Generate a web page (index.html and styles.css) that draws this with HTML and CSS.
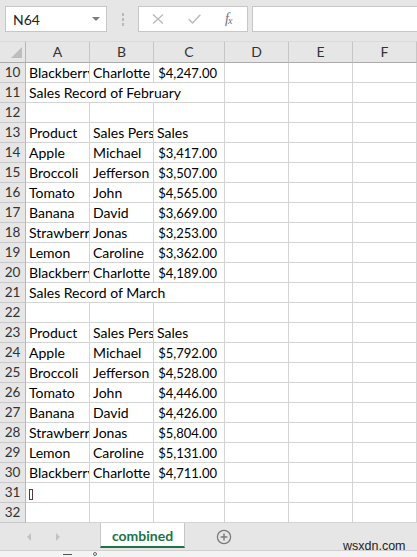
FILE: index.html
```html
<!DOCTYPE html>
<html>
<head>
<meta charset="utf-8">
<link rel="stylesheet" href="styles.css">
</head>
<body>
<div class="toolbar">
  <div class="namebox"><span class="ref">N64</span><span class="caret"></span></div>
  <div class="dots"><i></i><i></i><i></i></div>
  <div class="fxbox">
    <svg class="ico-x" width="12" height="10" viewBox="0 0 12 10"><path d="M1 0.5 L11 9.5 M11 0.5 L1 9.5" stroke="#b9b9b9" stroke-width="1.3" fill="none"/></svg>
    <svg class="ico-ok" width="13" height="10" viewBox="0 0 13 10"><path d="M0.8 5.2 L4.6 9 L12.3 0.8" stroke="#b9b9b9" stroke-width="1.4" fill="none"/></svg>
    <span class="fx">f<sub>x</sub></span>
  </div>
  <div class="formula"></div>
</div>

<div class="grid">
  <div class="corner"><span class="tri"></span></div>
  <div class="ch">A</div><div class="ch">B</div><div class="ch">C</div><div class="ch">D</div><div class="ch">E</div><div class="ch">F</div>

  <div class="rh">10</div><div class="c">Blackberry</div><div class="c">Charlotte</div><div class="c num">$4,247.00</div><div class="c"></div><div class="c"></div><div class="c"></div>
  <div class="rh">11</div><div class="c span3">Sales Record of February</div><div class="c"></div><div class="c"></div><div class="c"></div>
  <div class="rh">12</div><div class="c"></div><div class="c"></div><div class="c"></div><div class="c"></div><div class="c"></div><div class="c"></div>
  <div class="rh">13</div><div class="c">Product</div><div class="c">Sales Person</div><div class="c">Sales</div><div class="c"></div><div class="c"></div><div class="c"></div>
  <div class="rh">14</div><div class="c">Apple</div><div class="c">Michael</div><div class="c num">$3,417.00</div><div class="c"></div><div class="c"></div><div class="c"></div>
  <div class="rh">15</div><div class="c">Broccoli</div><div class="c">Jefferson</div><div class="c num">$3,507.00</div><div class="c"></div><div class="c"></div><div class="c"></div>
  <div class="rh">16</div><div class="c">Tomato</div><div class="c">John</div><div class="c num">$4,565.00</div><div class="c"></div><div class="c"></div><div class="c"></div>
  <div class="rh">17</div><div class="c">Banana</div><div class="c">David</div><div class="c num">$3,669.00</div><div class="c"></div><div class="c"></div><div class="c"></div>
  <div class="rh">18</div><div class="c">Strawberry</div><div class="c">Jonas</div><div class="c num">$3,253.00</div><div class="c"></div><div class="c"></div><div class="c"></div>
  <div class="rh">19</div><div class="c">Lemon</div><div class="c">Caroline</div><div class="c num">$3,362.00</div><div class="c"></div><div class="c"></div><div class="c"></div>
  <div class="rh">20</div><div class="c">Blackberry</div><div class="c">Charlotte</div><div class="c num">$4,189.00</div><div class="c"></div><div class="c"></div><div class="c"></div>
  <div class="rh">21</div><div class="c span3">Sales Record of March</div><div class="c"></div><div class="c"></div><div class="c"></div>
  <div class="rh">22</div><div class="c"></div><div class="c"></div><div class="c"></div><div class="c"></div><div class="c"></div><div class="c"></div>
  <div class="rh">23</div><div class="c">Product</div><div class="c">Sales Person</div><div class="c">Sales</div><div class="c"></div><div class="c"></div><div class="c"></div>
  <div class="rh">24</div><div class="c">Apple</div><div class="c">Michael</div><div class="c num">$5,792.00</div><div class="c"></div><div class="c"></div><div class="c"></div>
  <div class="rh">25</div><div class="c">Broccoli</div><div class="c">Jefferson</div><div class="c num">$4,528.00</div><div class="c"></div><div class="c"></div><div class="c"></div>
  <div class="rh">26</div><div class="c">Tomato</div><div class="c">John</div><div class="c num">$4,446.00</div><div class="c"></div><div class="c"></div><div class="c"></div>
  <div class="rh">27</div><div class="c">Banana</div><div class="c">David</div><div class="c num">$4,426.00</div><div class="c"></div><div class="c"></div><div class="c"></div>
  <div class="rh">28</div><div class="c">Strawberry</div><div class="c">Jonas</div><div class="c num">$5,804.00</div><div class="c"></div><div class="c"></div><div class="c"></div>
  <div class="rh">29</div><div class="c">Lemon</div><div class="c">Caroline</div><div class="c num">$5,131.00</div><div class="c"></div><div class="c"></div><div class="c"></div>
  <div class="rh">30</div><div class="c">Blackberry</div><div class="c">Charlotte</div><div class="c num">$4,711.00</div><div class="c"></div><div class="c"></div><div class="c"></div>
  <div class="rh">31</div><div class="c"><span class="tofu"></span></div><div class="c"></div><div class="c"></div><div class="c"></div><div class="c"></div><div class="c"></div>
  <div class="rh">32</div><div class="c"></div><div class="c"></div><div class="c"></div><div class="c"></div><div class="c"></div><div class="c"></div>
</div>

<div class="tabbar">
  <div class="nav"><span class="arr-l"></span><span class="arr-r"></span></div>
  <div class="tab">combined</div>
  <svg class="add" width="16" height="16" viewBox="0 0 16 16"><circle cx="8" cy="8" r="6.6" stroke="#7a7a7a" stroke-width="1.3" fill="none"/><path d="M8 4.6 V11.4 M4.6 8 H11.4" stroke="#7a7a7a" stroke-width="1.4"/></svg>
</div>
<div class="statusbar"><span class="sb-line"></span><span class="sb-dot"></span></div>
<div class="watermark">wsxdn.com</div>
</body>
</html>
```
FILE: styles.css
```css
* { box-sizing: border-box; }
html, body { margin: 0; padding: 0; }
body {
  width: 417px;
  height: 557px;
  overflow: hidden;
  position: relative;
  background: #fff;
  font-family: Lato, "Liberation Sans", sans-serif;
  color: #000;
}

/* formula bar */
.toolbar {
  height: 41px;
  background: #e6e6e6;
  display: flex;
  align-items: flex-start;
  padding: 6px 0 0 5px;
}
.namebox {
  width: 102px;
  height: 26px;
  background: #fff;
  border: 1px solid #c6c6c6;
  display: flex;
  align-items: center;
  padding-left: 7px;
  font-size: 14px;
  color: #222;
}
.caret {
  margin-left: auto;
  margin-right: 6px;
  width: 0;
  height: 0;
  border-left: 4px solid transparent;
  border-right: 4px solid transparent;
  border-top: 4px solid #7c7c7c;
}
.dots {
  width: 31px;
  height: 26px;
  display: flex;
  flex-direction: column;
  align-items: center;
  gap: 2px;
  padding-top: 7px;
}
.dots i {
  display: block;
  width: 2px;
  height: 3px;
  background: #b9b9b9;
}
.fxbox {
  width: 110px;
  height: 26px;
  background: #fff;
  border: 1px solid #c6c6c6;
  display: flex;
  align-items: center;
  padding-left: 13px;
}
.ico-ok { margin-left: 24px; }
.fx {
  margin-left: 24px;
  font-family: "Liberation Serif", serif;
  font-style: italic;
  font-size: 14px;
  color: #6f6f6f;
  letter-spacing: -1px;
}
.fx sub { font-size: 10px; vertical-align: -1px; }
.formula {
  flex: 1;
  height: 26px;
  margin-left: 4px;
  background: #fff;
  border: 1px solid #c6c6c6;
  border-right: none;
}

/* sheet grid */
.grid {
  display: grid;
  grid-template-columns: 26px 64px 64px 71px 64px 64px 64px;
  grid-template-rows: 22px;
  grid-auto-rows: 20px;
}
.corner {
  background: #e6e6e6;
  border-right: 1px solid #b6b6b6;
  border-bottom: 1px solid #ababab;
  border-top: 1px solid #dadada;
  position: relative;
}
.tri {
  position: absolute;
  left: 11px;
  top: 5px;
  width: 0;
  height: 0;
  border-left: 11px solid transparent;
  border-bottom: 11px solid #bdbdbd;
}
.ch {
  background: #e6e6e6;
  border-top: 1px solid #dadada;
  border-right: 1px solid #c6c6c6;
  border-bottom: 1px solid #ababab;
  text-align: center;
  font-size: 14px;
  line-height: 20px;
  color: #333;
}
.rh {
  background: #e6e6e6;
  border-right: 1px solid #b6b6b6;
  border-bottom: 1px solid #c9c9c9;
  text-align: center;
  font-size: 13.5px;
  line-height: 19px;
  color: #333;
}
.c {
  border-right: 1px solid #d4d4d4;
  border-bottom: 1px solid #d4d4d4;
  padding: 0 2px 0 3px;
  font-size: 14px;
  line-height: 20px;
  white-space: nowrap;
  overflow: hidden;
}
.span3 { grid-column: span 3; }
.num { text-align: right; padding-right: 7px; font-size: 13px; }
.tofu {
  display: inline-block;
  width: 4px;
  height: 11px;
  border: 1px solid #5a3a3a;
  vertical-align: -2px;
}

/* sheet tabs */
.tabbar {
  height: 28px;
  background: #e6e6e6;
  border-bottom: 1px solid #cfcfcf;
  display: flex;
  align-items: flex-start;
}
.nav {
  width: 100px;
  height: 27px;
  display: flex;
  align-items: center;
  padding-left: 27px;
  padding-top: 1px;
}
.arr-l {
  width: 0; height: 0;
  border-top: 4px solid transparent;
  border-bottom: 4px solid transparent;
  border-right: 4px solid #c2c2c2;
}
.arr-r {
  margin-left: 25px;
  width: 0; height: 0;
  border-top: 4px solid transparent;
  border-bottom: 4px solid transparent;
  border-left: 4px solid #c2c2c2;
}
.tab {
  width: 85px;
  height: 25px;
  background: #fff;
  border-left: 1px solid #c6c6c6;
  border-right: 1px solid #c6c6c6;
  border-bottom: 2px solid #217346;
  color: #217346;
  font-weight: bold;
  font-size: 14px;
  line-height: 21px;
  padding-top: 2px;
  text-align: center;
}
.add { margin-left: 31px; margin-top: 6px; }
.statusbar {
  height: 6px;
  background: #f3f3f3;
  position: relative;
}
.sb-line {
  position: absolute;
  left: 63px; top: 3px;
  width: 9px; height: 1px;
  background: #555;
}
.sb-dot {
  position: absolute;
  left: 93px; top: 1px;
  width: 4px; height: 4px;
  border: 1px solid #666;
  border-radius: 50%;
}
.watermark {
  position: absolute;
  left: 343px;
  top: 539px;
  font-family: "Liberation Sans", Arial, sans-serif;
  font-size: 12.5px;
  color: #222;
}
```
